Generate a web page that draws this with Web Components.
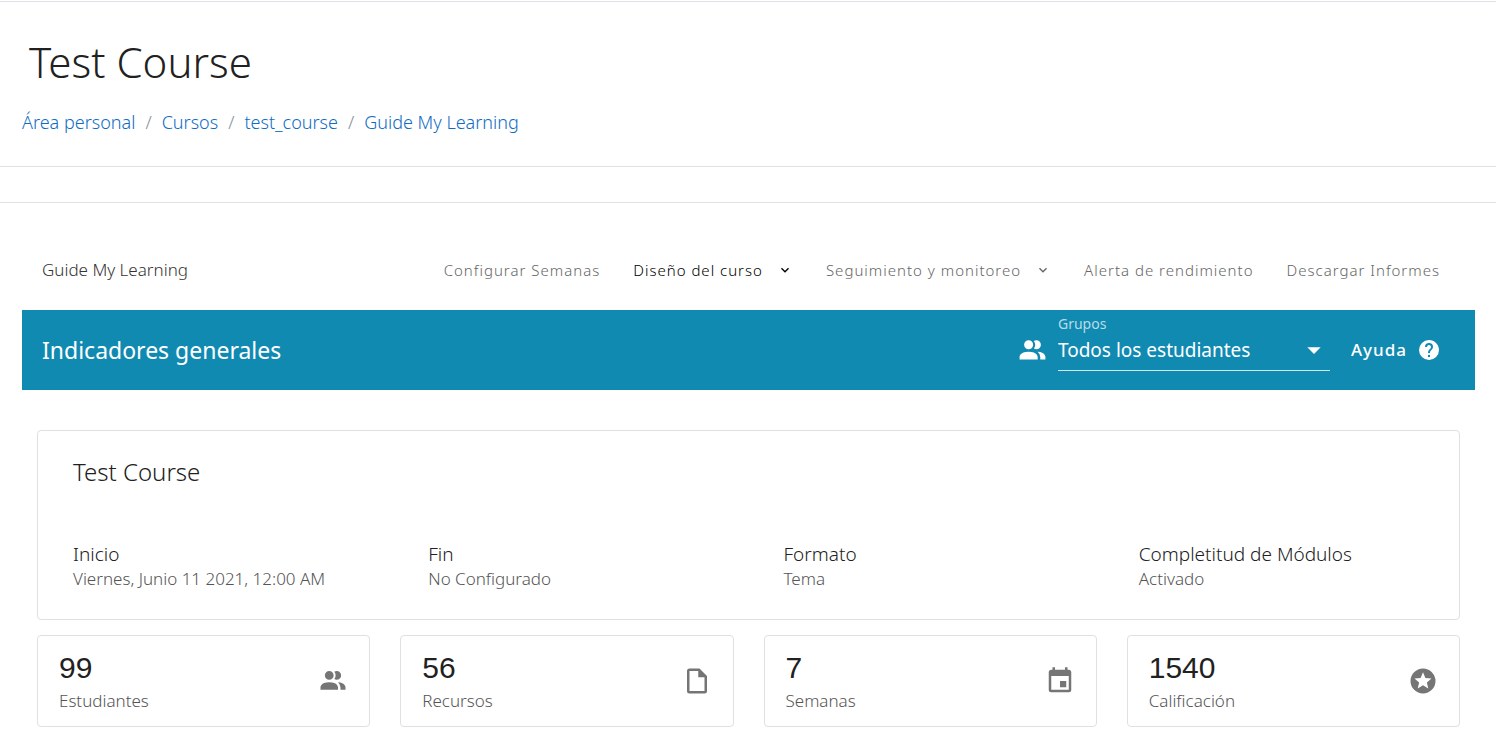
<!DOCTYPE html>
<html lang="es">
<head>
<meta charset="utf-8">
<meta name="viewport" content="width=device-width, initial-scale=1">
<title>Guide My Learning</title>
<style>
  body { margin: 0; background: #fff; color: #212121; font-family: "Noto Sans", "Open Sans", sans-serif; }
</style>
</head>
<body>
<course-header heading="Test Course"></course-header>
<main>
  <plugin-nav brand="Guide My Learning"></plugin-nav>
  <title-bar heading="Indicadores generales"></title-bar>
  <course-card heading="Test Course">
    <info-item label="Inicio">Viernes, Junio 11 2021, 12:00 AM</info-item>
    <info-item label="Fin">No Configurado</info-item>
    <info-item label="Formato">Tema</info-item>
    <info-item label="Completitud de Módulos">Activado</info-item>
  </course-card>
  <stat-row>
    <stat-card value="99" icon="people">Estudiantes</stat-card>
    <stat-card value="56" icon="file">Recursos</stat-card>
    <stat-card value="7" icon="calendar">Semanas</stat-card>
    <stat-card value="1540" icon="star">Calificación</stat-card>
  </stat-row>
</main>
<script>
const ICONS = {
  people: 'M16 17V19H2V17S2 13 9 13 16 17 16 17M12.5 7.5A3.5 3.5 0 1 0 9 11A3.5 3.5 0 0 0 12.5 7.5M15.94 13A5.32 5.32 0 0 1 18 17V19H22V17S22 13.37 15.94 13M15 4A3.39 3.39 0 0 0 13.07 4.59A5 5 0 0 1 13.07 10.41A3.39 3.39 0 0 0 15 11A3.5 3.5 0 0 0 15 4Z',
  file: 'M6 2H14L20 8V20A2 2 0 0 1 18 22H6A2 2 0 0 1 4 20V4A2 2 0 0 1 6 2M6 4V20H18V9H13V4Z',
  calendar: 'M19 19H5V8H19M16 1V3H8V1H6V3H5C3.890 3 3 3.890 3 5V19A2 2 0 0 0 5 21H19A2 2 0 0 0 21 19V5C21 3.890 20.100 3 19 3H18V1M17 12H12V17H17V12Z',
  star: 'M16.230 18L12 15.450L7.770 18L8.890 13.190L5.160 9.960L10.080 9.540L12 5L13.920 9.530L18.840 9.950L15.110 13.180L16.230 18M12 2C6.470 2 2 6.500 2 12A10 10 0 0 0 12 22A10 10 0 0 0 22 12A10 10 0 0 0 12 2Z',
  help: 'M15.070 11.250L14.170 12.170C13.450 12.890 13 13.500 13 15H11V14.500C11 13.390 11.450 12.390 12.170 11.670L13.410 10.410C13.780 10.050 14 9.550 14 9C14 7.890 13.100 7 12 7A2 2 0 0 0 10 9H8A4 4 0 0 1 12 5A4 4 0 0 1 16 9C16 9.880 15.640 10.670 15.070 11.250M13 19H11V17H13M12 2A10 10 0 0 0 2 12A10 10 0 0 0 12 22A10 10 0 0 0 22 12C22 6.470 17.500 2 12 2Z',
  chevron: 'M7.410 8.580L12 13.170L16.590 8.580L18 10L12 16L6 10Z',
  caret: 'M7 10L12 15L17 10Z'
};

class BaseElement extends HTMLElement {
  render(css, html) {
    this.attachShadow({ mode: 'open' }).innerHTML = `<style>*{box-sizing:border-box}${css}</style>${html}`;
  }
}

class MdIcon extends BaseElement {
  connectedCallback() {
    this.render(
      ':host{display:inline-block;flex:none;width:24px;height:24px}svg{display:block;width:100%;height:100%;fill:currentColor}',
      `<svg viewBox="0 0 24 24" aria-hidden="true"><path fill-rule="evenodd" d="${ICONS[this.getAttribute('name')]}"/></svg>`);
  }
}

class CourseHeader extends BaseElement {
  connectedCallback() {
    this.render(`
      :host{display:block;margin-top:1px;border-top:1px solid #dee2e6;border-bottom:1px solid #dee2e6}
      header{padding:32px 22px;border-bottom:1px solid #dee2e6}
      h1{margin:0 0 20px;padding-left:7px;font-size:42px;line-height:56px;font-weight:300}
      ol{display:flex;flex-wrap:wrap;margin:0;padding:0;list-style:none;font-size:18px;line-height:24px;font-weight:350}
      li+li::before{content:"/";padding:0 10px;color:#868e96}
      a{color:#0f6cc4;text-decoration:none}
      .space{height:35px}
    `, `
      <header>
        <h1>${this.getAttribute('heading')}</h1>
        <nav aria-label="Ruta"><ol>
          <li><a href="#">Área personal</a></li><li><a href="#">Cursos</a></li>
          <li><a href="#">test_course</a></li><li><a href="#">Guide My Learning</a></li>
        </ol></nav>
      </header>
      <div class="space"></div>`);
  }
}

class PluginNav extends BaseElement {
  connectedCallback() {
    this.render(`
      :host{display:flex;align-items:center;justify-content:space-between;margin:27px 21px 0 22px;padding:0 35px 0 20px;height:80px}
      .brand{font-size:17px;line-height:24px;font-weight:350;color:#333}
      nav{display:flex;align-items:center;gap:33px}
      a,button{display:flex;align-items:center;gap:14px;margin:0;padding:0;border:0;background:none;font:300 15px/24px "Noto Sans",sans-serif;letter-spacing:1px;color:#666;text-decoration:none;white-space:nowrap}
      .active{color:#000}
      md-icon{width:16px;height:16px}
    `, `
      <span class="brand">${this.getAttribute('brand')}</span>
      <nav aria-label="Principal">
        <a href="#">Configurar Semanas</a>
        <button type="button" class="active">Diseño del curso<md-icon name="chevron"></md-icon></button>
        <button type="button">Seguimiento y monitoreo<md-icon name="chevron"></md-icon></button>
        <a href="#">Alerta de rendimiento</a>
        <a href="#">Descargar Informes</a>
      </nav>`);
  }
}

class TitleBar extends BaseElement {
  connectedCallback() {
    this.render(`
      :host{display:flex;align-items:center;margin:0 21px 40px 22px;padding:0 34px 0 20px;height:80px;background:#118ab2;color:#fff}
      h2{flex:1;margin:0;font-size:23px;line-height:32px;font-weight:400}
      .people{width:31px;height:31px;margin-right:10px}
      .field{display:flex;flex-direction:column;width:272px;margin-right:21px;padding-bottom:2px;margin-bottom:14px;border-bottom:1px solid #cfe8f0}
      label{font-size:14px;line-height:16px;color:#b8dce8}
      .box{display:grid;align-items:center;height:36px}
      .box>*{grid-area:1/1}
      .box md-icon{width:32px;height:32px;justify-self:end;pointer-events:none}
      select{appearance:none;width:100%;margin:0;padding:0;border:0;background:none;color:#fff;font:400 19px/24px "Noto Sans",sans-serif}
      button{display:flex;align-items:center;gap:10px;margin:0;padding:0;border:0;background:none;color:#fff;font:500 17px/24px "Noto Sans",sans-serif;letter-spacing:1px}
    `, `
      <h2>${this.getAttribute('heading')}</h2>
      <md-icon class="people" name="people"></md-icon>
      <div class="field">
        <label for="group">Grupos</label>
        <div class="box"><select id="group"><option>Todos los estudiantes</option></select><md-icon name="caret"></md-icon></div>
      </div>
      <button type="button">Ayuda<md-icon name="help"></md-icon></button>`);
  }
}

class CourseCard extends BaseElement {
  connectedCallback() {
    this.render(`
      :host{display:block;margin:0 36px 15px 37px;border:1px solid #e0e0e0;border-radius:4px;padding:24px 0 28px}
      h2{margin:0 35px 52px;font-size:24px;line-height:34px;font-weight:350}
      .grid{display:grid;grid-template-columns:repeat(4,1fr)}
    `, `<h2>${this.getAttribute('heading')}</h2><div class="grid"><slot></slot></div>`);
  }
}

class InfoItem extends BaseElement {
  connectedCallback() {
    this.render(`
      :host{display:block;padding-left:35px}
      .label{font-size:19px;line-height:26px;font-weight:350}
      .value{font-size:17px;line-height:24px;font-weight:300;color:#555}
    `, `<div class="label">${this.getAttribute('label')}</div><div class="value"><slot></slot></div>`);
  }
}

class StatRow extends BaseElement {
  connectedCallback() {
    this.render(':host{display:grid;grid-template-columns:repeat(4,1fr);gap:30px;margin:0 36px 20px 37px}', '<slot></slot>');
  }
}

class StatCard extends BaseElement {
  connectedCallback() {
    this.render(`
      :host{display:flex;align-items:center;justify-content:space-between;border:1px solid #e0e0e0;border-radius:4px;padding:12px 21px}
      .value{font:400 30px/40px "Liberation Sans",sans-serif}
      .label{font-size:17px;line-height:26px;font-weight:300;color:#555}
      md-icon{width:30px;height:30px;color:#757575}
    `, `
      <div><div class="value">${this.getAttribute('value')}</div><div class="label"><slot></slot></div></div>
      <md-icon name="${this.getAttribute('icon')}"></md-icon>`);
  }
}

customElements.define('md-icon', MdIcon);
customElements.define('course-header', CourseHeader);
customElements.define('plugin-nav', PluginNav);
customElements.define('title-bar', TitleBar);
customElements.define('course-card', CourseCard);
customElements.define('info-item', InfoItem);
customElements.define('stat-row', StatRow);
customElements.define('stat-card', StatCard);
</script>
</body>
</html>
